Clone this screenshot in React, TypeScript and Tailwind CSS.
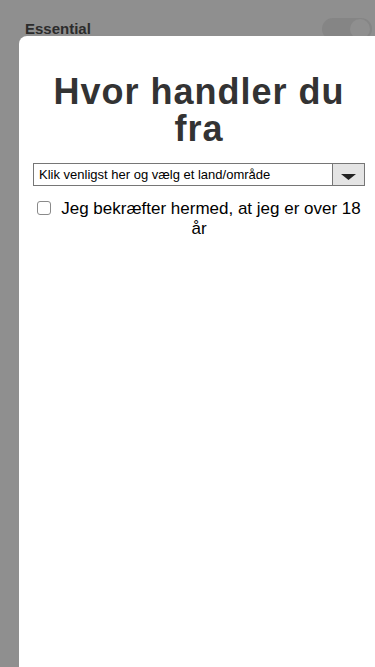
export default function App() {
  return (
    <div className="relative h-[667px] w-[375px] overflow-hidden bg-[#8f8f8f] font-['Liberation_Sans',Arial,sans-serif]">
      {/* background page, dimmed */}
      <div className="flex items-center justify-between px-[25px] pt-[18px]">
        <span className="text-[15px] font-bold text-[#2c2c2c]">Essential</span>
        <div className="mr-[-22px] flex h-[22px] w-[50px] items-center justify-end rounded-full bg-[#858585] pr-[2px]">
          <div className="h-[20px] w-[20px] rounded-full bg-[#8f8f8f]" />
        </div>
      </div>

      {/* modal */}
      <div className="absolute left-[19px] top-[36px] bottom-0 right-0 rounded-tl-[8px] bg-white">
        <div className="pl-[14px] pr-[10px] pt-[37px]">
          <h1 className="px-[10px] text-center text-[36px] font-bold leading-[37px] tracking-[1px] text-[#333]">
            Hvor handler du fra
          </h1>
          <div className="mt-[16px] flex h-[23px] border border-[#767676] bg-white">
            <div className="flex flex-1 items-center truncate pl-[5px] text-[13px] text-black">
              Klik venligst her og vælg et land/område
            </div>
            <div className="flex w-[32px] items-center justify-center border-l border-[#767676] bg-[#e4e4e4] pt-[5px]">
              <svg width="15" height="6" viewBox="0 0 15 6">
                <path d="M0 0h15L7.5 6z" fill="#222" />
              </svg>
            </div>
          </div>
          <p className="mt-[13px] text-center text-[17px] leading-[20px] text-black">
            <span className="mr-[10px] inline-block h-[14px] w-[14px] rounded-[3px] border border-[#8a8a8a] bg-white align-[-1px]" />
            Jeg bekræfter hermed, at jeg er over 18 år
          </p>
        </div>
      </div>
    </div>
  );
}
